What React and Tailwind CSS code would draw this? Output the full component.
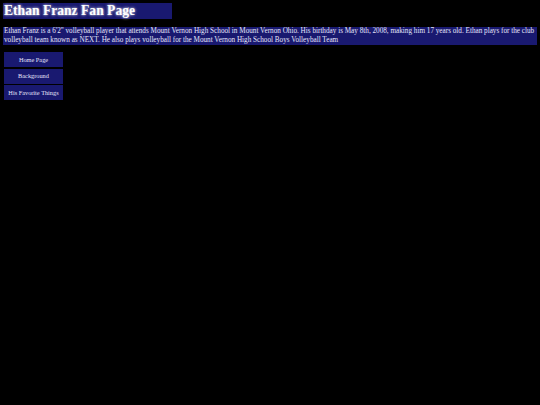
import React from 'react';

const links = ['Home Page', 'Background', 'His Favorite Things'];

export default function App() {
  return (
    <div className="min-h-[405px] bg-black text-white px-[3px] pt-[3px]" style={{ fontFamily: '"Liberation Serif", serif' }}>
      <h1 className="w-[169px] h-[16px] bg-[#191970] px-[1px] text-[13.6px] leading-[16px] font-bold [text-shadow:0_0_3px_#ffffff]">
        Ethan Franz Fan Page
      </h1>
      <p className="mt-[8px] bg-[#191970] text-[#e6e6fa] text-[7.2px] leading-[9px] px-[1px] py-[0px]">
        Ethan Franz is a 6'2" volleyball player that attends Mount Vernon High School in Mount Vernon Ohio. His birthday is May 8th, 2008, making him 17 years old. Ethan plays for the club volleyball team known as NEXT. He also plays volleyball for the Mount Vernon High School Boys Volleyball Team
      </p>
      <nav className="mt-[7px] ml-[1px] flex flex-col gap-[1.5px] w-[59px]">
        {links.map((l) => (
          <a key={l} href="#" className="h-[15px] bg-[#191970] text-[#e6e6fa] text-[6.3px] flex items-center justify-center whitespace-nowrap">
            {l}
          </a>
        ))}
      </nav>
    </div>
  );
}
